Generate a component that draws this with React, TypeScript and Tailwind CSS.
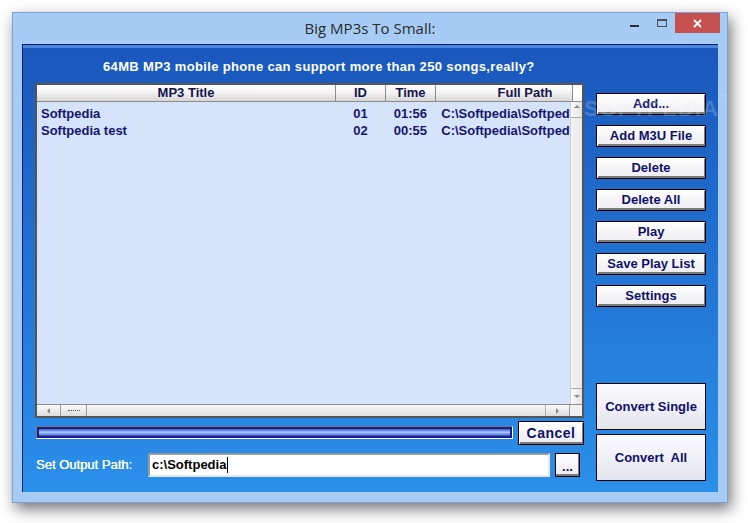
import React from "react";

const font = "font-['Liberation_Sans',Arial,sans-serif]";

const SideButton: React.FC<{ label: string }> = ({ label }) => (
  <div className="flex h-[22px] w-[110px] items-center justify-center border border-black bg-[linear-gradient(to_bottom,#ffffff,#ececf2)] text-[13px] font-bold text-[#10106a] shadow-[inset_1px_1px_0_#ffffff,inset_-1px_-2px_0_#7a7a7a]">
    {label}
  </div>
);

const BigButton: React.FC<{ label: string }> = ({ label }) => (
  <div className="flex h-[47px] w-[110px] items-center justify-center border border-black bg-[linear-gradient(to_bottom,#fbfbfe,#e4e4ee)] text-[13px] font-bold text-[#10106a] whitespace-pre">
    {label}
  </div>
);

const HeaderCell: React.FC<{ className?: string; children?: React.ReactNode }> = ({
  className,
  children,
}) => (
  <div
    className={`flex h-full items-center justify-center border-r border-[#8c8c8c] text-[13px] font-bold text-[#14144e] ${className ?? ""}`}
  >
    {children}
  </div>
);

const rows = [
  { title: "Softpedia", id: "01", time: "01:56", path: "C:\\Softpedia\\Softped" },
  { title: "Softpedia test", id: "02", time: "00:55", path: "C:\\Softpedia\\Softped" },
];

const Arrow: React.FC<{ dir: "up" | "down" | "left" | "right" }> = ({ dir }) => {
  const pts = {
    up: "0,4 3,1 6,4",
    down: "0,1 3,4 6,1",
    left: "4,0 1,3 4,6",
    right: "1,0 4,3 1,6",
  }[dir];
  return (
    <svg width="6" height="6" viewBox="0 0 6 6">
      <polygon points={pts} fill="#8a8a8a" />
    </svg>
  );
};

const FileList: React.FC = () => (
  <div className="flex h-[335px] w-[549px] flex-col border-2 border-[#555555] bg-[#d5e3fb]">
    {/* header */}
    <div className="flex h-[17px] border-b border-[#8c8c8c] bg-[linear-gradient(to_bottom,#ffffff,#f2f2f2_50%,#d6d6d6)]">
      <HeaderCell className="w-[299px]">MP3 Title</HeaderCell>
      <HeaderCell className="w-[50px]">ID</HeaderCell>
      <HeaderCell className="w-[50px]">Time</HeaderCell>
      <HeaderCell className="w-[137px] pl-[42px]">Full Path</HeaderCell>
      <div className="h-full flex-1 bg-white" />
    </div>
    <div className="flex min-h-0 flex-1">
      <div className="flex-1 overflow-hidden pt-[3px]">
        {rows.map((r) => (
          <div
            key={r.id}
            className="flex h-[17px] items-center whitespace-nowrap text-[13px] font-bold text-[#16166e]"
          >
            <div className="w-[299px] pl-[4px]">{r.title}</div>
            <div className="w-[50px] text-center">{r.id}</div>
            <div className="w-[50px] text-center">{r.time}</div>
            <div className="w-[135px] pl-[6px]">{r.path}</div>
          </div>
        ))}
      </div>
      {/* vertical scrollbar */}
      <div className="flex w-[12px] flex-col border-l border-[#d0d0d0] bg-[#f1f1f1]">
        <div className="flex h-[16px] items-start justify-center border-b border-[#a8a8a8] bg-[linear-gradient(to_right,#fafafa,#e4e4e4)] pt-[2px]">
          <Arrow dir="up" />
        </div>
        <div className="flex-1 bg-[linear-gradient(to_right,#f4f4f4,#e8e8e8)]" />
        <div className="flex h-[16px] items-center justify-center border-t border-[#a8a8a8] bg-[linear-gradient(to_right,#fafafa,#e4e4e4)]">
          <Arrow dir="down" />
        </div>
      </div>
    </div>
    {/* horizontal scrollbar */}
    <div className="flex h-[12px] border-t border-[#8c8c8c] bg-[linear-gradient(to_bottom,#fbfbfb,#dcdcdc)]">
      <div className="flex w-[24px] items-center justify-center border-r border-[#9a9a9a]">
        <Arrow dir="left" />
      </div>
      <div className="flex w-[26px] items-center justify-center border-r border-[#9a9a9a]">
        <div className="h-[2px] w-[12px] border-t border-dotted border-[#555]" />
      </div>
      <div className="flex-1 border-r border-[#b0b0b0] bg-[linear-gradient(to_bottom,#f6f6f6,#e2e2e2)]" />
      <div className="flex w-[24px] items-center justify-center border-r border-[#9a9a9a]">
        <Arrow dir="right" />
      </div>
      <div className="w-[12px] bg-[#f0f0f0]" />
    </div>
  </div>
);

export default function App() {
  return (
    <div className={`h-[523px] w-[748px] overflow-hidden bg-white pl-[12px] pt-[12px] ${font}`}>
      <div className="flex h-[491px] w-[716px] flex-col border border-[#7aa3d4] bg-[#a6cbf4] shadow-[3px_6px_14px_rgba(0,0,0,0.55)]">
        {/* title bar */}
        <div className="grid h-[31px] grid-cols-[1fr_auto_1fr]">
          <div />
          <div className="pt-[5px] font-['Open_Sans',sans-serif] text-[15px] leading-[20px] text-[#2b2b2b]">
            Big MP3s To Small:
          </div>
          <div className="flex items-start justify-end pr-[7px]">
            <div className="mr-[18px] mt-[12px] h-[2px] w-[9px] bg-[#2e2e2e]" />
            <div className="mr-[8px] mt-[6px] h-[8px] w-[10px] border border-t-2 border-[#4d4d4d]" />
            <div className="flex h-[20px] w-[45px] items-center justify-center bg-[#c75050]">
              <svg width="9" height="9" viewBox="0 0 9 9">
                <path d="M1 1L8 8M8 1L1 8" stroke="#fff" strokeWidth="1.8" />
              </svg>
            </div>
          </div>
        </div>

        {/* client area */}
        <div className="relative ml-[9px] flex h-[448px] w-[696px] flex-col border-l border-t border-[#0c1f6e] bg-[linear-gradient(to_bottom,#1a57bd,#2a90ea)] shadow-[inset_0_3px_0_#4a86de]">
          <div className="h-[38px] whitespace-nowrap pl-[80px] pt-[15px] text-[13px] font-bold leading-[14px] tracking-[0.35px] text-white">
            64MB MP3 mobile phone can support more than 250 songs,really?
          </div>

          <div className="flex pl-[12px]">
            {/* left column */}
            <div className="flex w-[549px] flex-col">
              <FileList />
              <div className="mt-[3px] flex h-[24px] items-start">
                <div className="ml-[1px] mt-[5px] h-[13px] w-[477px] border border-b-white border-l-[#7a7a7a] border-r-white border-t-[#7a7a7a]">
                  <div className="h-full w-full border-2 border-[#1c1c88] bg-[linear-gradient(to_bottom,#3458c8,#a9c8f6_45%,#7c9ee8_70%,#2c48b8)]" />
                </div>
                <div className="ml-[5px] flex h-[24px] w-[66px] items-center justify-center border border-black bg-[linear-gradient(to_bottom,#ffffff,#ececf2)] text-[14px] font-bold tracking-[0.5px] text-[#10106a] shadow-[inset_1px_1px_0_#ffffff,inset_-1px_-2px_0_#7a7a7a]">
                  Cancel
                </div>
              </div>
              <div className="mt-[8px] flex h-[24px] items-center">
                <div className="w-[113px] pl-[1px] text-[13px] text-white [text-shadow:0.3px_0_0_#fff]">
                  Set Output Path:
                </div>
                <div className="flex h-[24px] w-[402px] items-center border-2 border-b-[#e6e6e6] border-l-[#9a9a9a] border-r-[#e6e6e6] border-t-[#9a9a9a] bg-white pl-[2px] text-[13px] font-bold text-black">
                  c:\Softpedia
                  <span className="ml-[1px] h-[16px] w-[1px] bg-black" />
                </div>
                <div className="ml-[5px] flex h-[24px] w-[25px] items-end justify-center border border-black bg-[linear-gradient(to_bottom,#ffffff,#ececf2)] pb-[3px] text-[13px] font-bold leading-[13px] text-[#10106a] shadow-[inset_-1px_-2px_0_#7a7a7a]">
                  ...
                </div>
              </div>
            </div>

            {/* right column */}
            <div className="ml-[12px] flex w-[110px] flex-col">
              <div className="mt-[10px] flex flex-col gap-[10px]">
                <SideButton label="Add..." />
                <SideButton label="Add M3U File" />
                <SideButton label="Delete" />
                <SideButton label="Delete All" />
                <SideButton label="Play" />
                <SideButton label="Save Play List" />
                <SideButton label="Settings" />
              </div>
              <div className="mt-[76px] flex flex-col gap-[4px]">
                <BigButton label="Convert Single" />
                <BigButton label="Convert  All" />
              </div>
            </div>
          </div>

          {/* watermark */}
          <div className="pointer-events-none absolute left-[561px] top-[47px] text-[22px] font-bold tracking-[1px] text-white/20">
            SOFTPEDIA<span className="align-top text-[8px]">™</span>
          </div>
        </div>
      </div>
    </div>
  );
}
